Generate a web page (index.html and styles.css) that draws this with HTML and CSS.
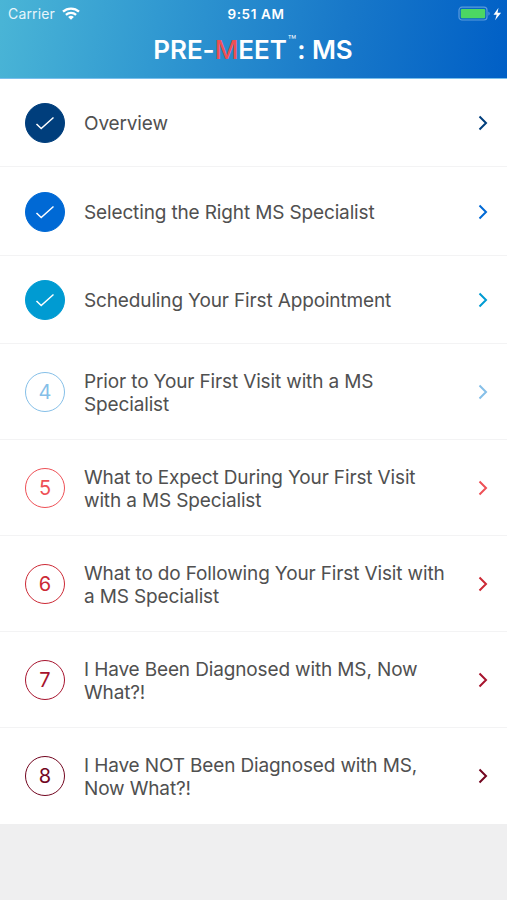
FILE: index.html
```html
<!DOCTYPE html>
<html lang="en">
<head>
<meta charset="utf-8">
<title>PRE-MEET: MS</title>
<link rel="stylesheet" href="styles.css">
</head>
<body>
<header class="header">
  <div class="status">
    <div class="carrier">
      <span>Carrier</span>
      <svg class="wifi" width="18" height="13" viewBox="0 0 18 13" fill="none" stroke="#fff" stroke-width="2.3">
        <path d="M1 4.700C5.500.500 12.500.500 17 4.700M3.900 7.900C6.800 5.300 11.200 5.300 14.100 7.900"/>
        <path d="M6.100 10Q9 7.500 11.900 10L9 12.800Z" fill="#fff" stroke="none"/>
      </svg>
    </div>
    <span class="time">9:51 AM</span>
    <div class="power">
      <svg width="44" height="16" viewBox="0 0 44 16">
        <rect x="1" y="1.200" width="28" height="12.800" rx="3" fill="none" stroke="#5a9bdc" stroke-width="1.200"/>
        <rect x="2.800" y="3" width="24.400" height="9.200" rx="1.200" fill="#4cd763"/>
        <path d="M30.500 5.500q2.200 2.100 0 4.200z" fill="#69a9e0"/>
        <path d="M40.500 1.700 35.500 8.700h3.200l-1.600 5.600 6-7.600h-3.600z" fill="#fff"/>
      </svg>
    </div>
  </div>
  <h1 class="title">PRE-<span class="accent">M</span>EET<span class="tm">™</span>: MS</h1>
</header>
<main class="list">
  <a class="row c1"><span class="badge done"><svg width="20" height="16" viewBox="0 0 20 16"><path d="M1.500 9 6.200 13.500 18.500 2.500"/></svg></span><span class="label">Overview</span><svg class="chevron" width="10" height="16" viewBox="0 0 10 16"><path d="M1.500 1.500 8 8 1.500 14.500"/></svg></a>
  <a class="row c2"><span class="badge done"><svg width="20" height="16" viewBox="0 0 20 16"><path d="M1.500 9 6.200 13.500 18.500 2.500"/></svg></span><span class="label">Selecting the Right MS Specialist</span><svg class="chevron" width="10" height="16" viewBox="0 0 10 16"><path d="M1.500 1.500 8 8 1.500 14.500"/></svg></a>
  <a class="row c3"><span class="badge done"><svg width="20" height="16" viewBox="0 0 20 16"><path d="M1.500 9 6.200 13.500 18.500 2.500"/></svg></span><span class="label">Scheduling Your First Appointment</span><svg class="chevron" width="10" height="16" viewBox="0 0 10 16"><path d="M1.500 1.500 8 8 1.500 14.500"/></svg></a>
  <a class="row tall c4"><span class="badge">4</span><span class="label">Prior to Your First Visit with a MS<br>Specialist</span><svg class="chevron" width="10" height="16" viewBox="0 0 10 16"><path d="M1.500 1.500 8 8 1.500 14.500"/></svg></a>
  <a class="row tall c5"><span class="badge">5</span><span class="label">What to Expect During Your First Visit<br>with a MS Specialist</span><svg class="chevron" width="10" height="16" viewBox="0 0 10 16"><path d="M1.500 1.500 8 8 1.500 14.500"/></svg></a>
  <a class="row tall c6"><span class="badge">6</span><span class="label">What to do Following Your First Visit with<br>a MS Specialist</span><svg class="chevron" width="10" height="16" viewBox="0 0 10 16"><path d="M1.500 1.500 8 8 1.500 14.500"/></svg></a>
  <a class="row tall c7"><span class="badge">7</span><span class="label">I Have Been Diagnosed with MS, Now<br>What?!</span><svg class="chevron" width="10" height="16" viewBox="0 0 10 16"><path d="M1.500 1.500 8 8 1.500 14.500"/></svg></a>
  <a class="row tall c8"><span class="badge">8</span><span class="label">I Have NOT Been Diagnosed with MS,<br>Now What?!</span><svg class="chevron" width="10" height="16" viewBox="0 0 10 16"><path d="M1.500 1.500 8 8 1.500 14.500"/></svg></a>
</main>
</body>
</html>
```
FILE: styles.css
```css
* { box-sizing: border-box; }
body {
  margin: 0;
  min-height: 900px;
  background: #efeff0;
  font-family: Inter, "Liberation Sans", sans-serif;
  color: #505050;
}
.header {
  height: 79px;
  color: #fff;
  background: linear-gradient(100deg, #4ab5d6 0%, #3199d1 31%, #1878c9 67%, #005fc6 100%);
  border-bottom: 1px solid #79bfec;
}
.status {
  display: grid;
  grid-template-columns: 1fr auto 1fr;
  align-items: center;
  height: 27px;
  padding: 0 5px 0 8px;
}
.carrier { display: flex; align-items: center; gap: 7px; font-size: 14px; letter-spacing: 0.15px; color: #e7f5fb; }
.wifi { margin-top: -1px; }
.time { font-size: 13.5px; font-weight: 600; letter-spacing: 0.6px; padding-left: 2px; }
.power { display: flex; justify-content: flex-end; }
.power svg { display: block; }
.title {
  margin: 7px 0 0;
  padding-right: 1px;
  text-align: center;
  font-size: 26px;
  line-height: 32px;
  font-weight: 600;
  letter-spacing: -0.05px;
}
.accent { color: #ed5054; font-weight: 500; }
.tm { display: inline-block; font-size: 14px; line-height: 10px; font-weight: 300; vertical-align: 13px; margin: 0 1px; }
.list { background: #fff; }
.row {
  display: flex;
  align-items: center;
  height: 88.4px;
  padding: 0 19px 0 25px;
  box-shadow: inset 0 -1px #f3f3f4;
}
.tall { height: 96px; }
.row:last-child { box-shadow: none; }
.badge {
  display: flex;
  align-items: center;
  justify-content: center;
  flex: none;
  width: 40px;
  height: 40px;
  border: 1.5px solid var(--tone);
  border-radius: 50%;
  color: var(--tone);
  font-size: 20px;
}
.done { background: var(--tone); }
.badge path { fill: none; stroke: #fff; stroke-width: 1.5; }
.label { flex: 1; margin-left: 19px; padding-top: 1px; font-size: 19px; line-height: 23px; letter-spacing: -0.14px; white-space: nowrap; }
.chevron { flex: none; }
.chevron path { fill: none; stroke: var(--tone); stroke-width: 2; }
.c1 { --tone: #003e7c; }
.c2 { --tone: #0069d5; }
.c3 { --tone: #009bd2; }
.c4 { --tone: #85bfe8; }
.c5 { --tone: #ee5056; }
.c6 { --tone: #cc2935; }
.c7 { --tone: #a7132d; }
.c8 { --tone: #72051f; }
```
